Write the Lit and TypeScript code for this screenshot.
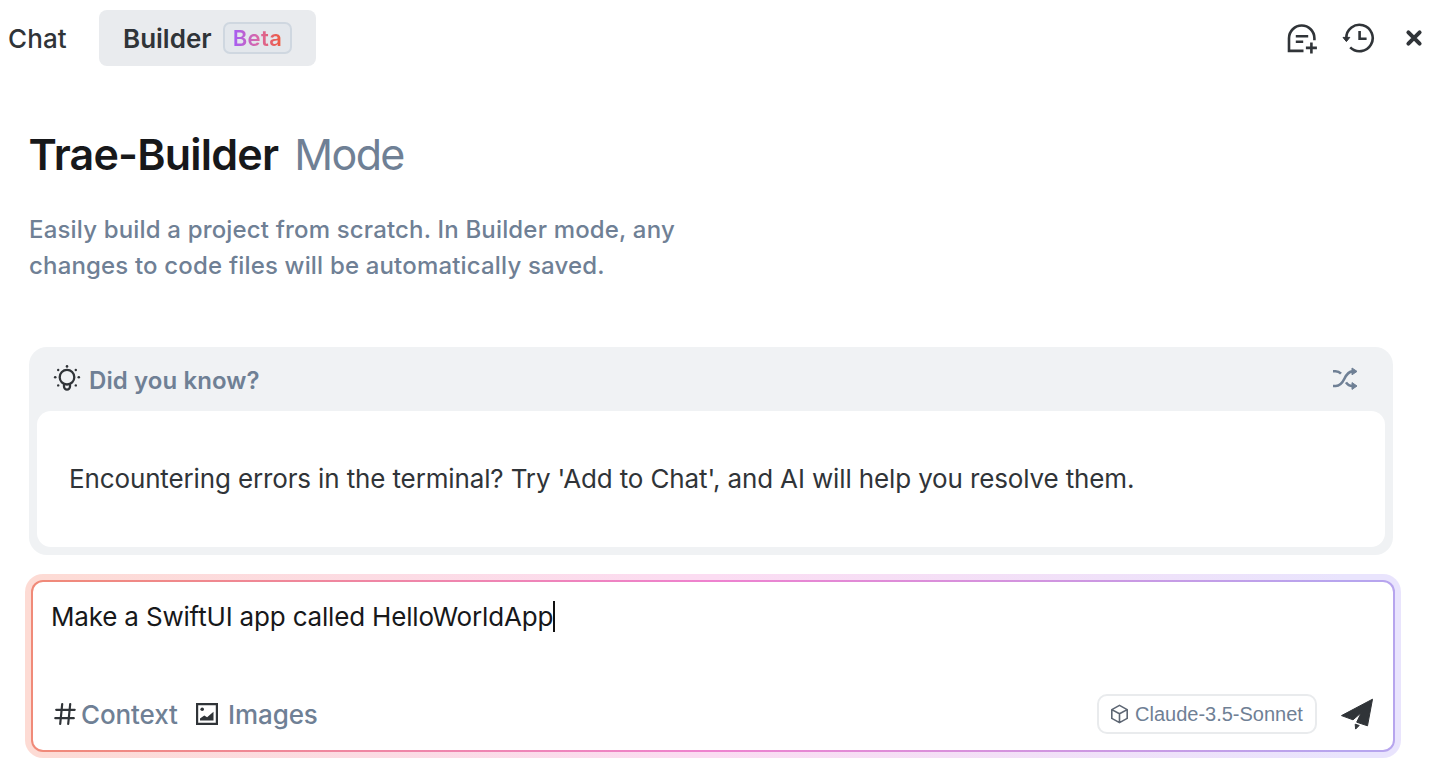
import { LitElement, html, css } from "lit";
import { customElement } from "lit/decorators.js";

@customElement("app-root")
export class AppRoot extends LitElement {
  static styles = css`
    :host {
      display: block;
      height: 774px;
      background: #fff;
      overflow: hidden;
      font-family: Inter, "Noto Sans", sans-serif;
      color: #303438;
      white-space: nowrap;
    }
    * { box-sizing: border-box; }
    svg { display: block; flex: none; }
    .top {
      display: flex;
      align-items: center;
      height: 76px;
      padding: 0 10px 0 8px;
    }
    .chat { width: 91px; font-size: 26px; font-weight: 500; letter-spacing: 0.1px; }
    .tab {
      display: flex;
      align-items: center;
      width: 217px;
      height: 56px;
      padding-left: 24px;
      border-radius: 8px;
      background: #e9ebee;
    }
    .builder { width: 100px; font-size: 26px; font-weight: 600; letter-spacing: 0; }
    .beta {
      display: flex;
      align-items: center;
      justify-content: center;
      width: 69px;
      height: 32px;
      border: 2px solid #cfd7e0;
      border-radius: 7px;
      background: #e3e7ec;
      font-size: 22px;
      font-weight: 600;
    }
    .beta span {
      background: linear-gradient(90deg, #a45cf5, #d868a8 50%, #ef5a3c);
      -webkit-background-clip: text;
      background-clip: text;
      color: transparent;
      letter-spacing: 0.4px;
    }
    .actions { display: flex; align-items: center; margin-left: auto; }
    .history { margin-left: 24px; }
    .close { margin-left: 27px; }
    h1 {
      margin: 51px 0 0 28.5px;
      line-height: 54px;
      font-size: 43px;
      font-weight: 600;
      letter-spacing: -0.8px;
      color: #17181a;
    }
    h1 span { margin-left: 6px; font-weight: 400; color: #6f8095; letter-spacing: -1.6px; }
    .intro {
      margin: 31px 0 0 29px;
      line-height: 36px;
      font-size: 24px;
      font-weight: 500;
      letter-spacing: 0.17px;
      color: #6f8095;
    }
    .tip {
      width: 1364px;
      height: 208px;
      margin: 63px 0 0 29px;
      padding: 0 8px 8px;
      border-radius: 18px;
      background: #f0f2f4;
    }
    .tip-head { display: flex; align-items: center; height: 64px; padding: 0 27px 0 16px; }
    .tip-title { margin-left: 8px; padding-top: 3px; font-size: 24px; font-weight: 600; letter-spacing: 0.1px; color: #6f8095; }
    .shuffle { margin-left: auto; }
    .tip-body {
      display: flex;
      align-items: center;
      height: 136px;
      padding: 0 0 2px 32px;
      border-radius: 14px;
      background: #fff;
      font-size: 26px;
      letter-spacing: -0.135px;
    }
    .glow {
      width: 1376px;
      height: 184px;
      margin: 19px 0 0 25px;
      padding: 6px;
      border-radius: 18px;
      background: linear-gradient(90deg, #fddbd4, #fbdcf2 50%, #e9e4fd 96%);
    }
    .edge {
      height: 172px;
      padding: 2px;
      border-radius: 12px;
      background: linear-gradient(90deg, #f08a78, #ee82cf 50%, #b7a5ee 96%);
    }
    .input {
      display: flex;
      flex-direction: column;
      justify-content: space-between;
      height: 168px;
      padding: 18px 19px 16px 18px;
      border-radius: 10px;
      background: #fff;
    }
    .prompt { display: flex; align-items: center; height: 32px; font-size: 26px; letter-spacing: -0.18px; color: #17181a; }
    .caret { width: 2px; height: 31px; background: #111; }
    .tools { display: flex; align-items: center; height: 40px; }
    .label { padding-top: 1px; font-size: 26px; font-weight: 500; letter-spacing: -0.1px; color: #6f8095; }
    .context { width: 114px; margin-left: 4px; }
    .images { margin-left: 9px; }
    .model {
      display: flex;
      align-items: center;
      width: 220px;
      height: 40px;
      margin-left: auto;
      padding-left: 11px;
      border: 2px solid #e9ebed;
      border-radius: 10px;
      font-family: "Liberation Sans", Arial, sans-serif;
      font-size: 20px;
      color: #6f8095;
    }
    .model span { margin-left: 6px; }
    .send { margin: -1px 0 0 23px; }
  `;

  render() {
    return html`
      <div class="top">
        <div class="chat">Chat</div>
        <div class="tab">
          <span class="builder">Builder</span>
          <span class="beta"><span>Beta</span></span>
        </div>
        <div class="actions">
          <svg width="32" height="32" viewBox="0 0 32 32" fill="none" stroke="#303438" stroke-width="2.6">
            <path d="M18.500 28.900H4V16.200a12.700 12.700 0 0 1 25.400 0v2M10.800 14.300h12.400M10.800 19.800h7.400M26.400 20.400v11M20.900 25.900h11" />
          </svg>
          <svg class="history" width="34" height="32" viewBox="0 0 34 32" fill="none" stroke="#303438" stroke-width="2.600">
            <path d="M5.300 17.200V16a13.200 13.200 0 1 1 3.900 9.400M18.600 9v7.700h7" />
            <path d="M2 15.400h6.800L5.400 19.600z" fill="#303438" stroke-width="1" stroke-linejoin="round" />
          </svg>
          <svg class="close" width="24" height="24" viewBox="0 0 24 24" stroke="#303438" stroke-width="4" stroke-linecap="round">
            <path d="M6.400 6.400l11.200 11.200M17.600 6.400L6.400 17.600" />
          </svg>
        </div>
      </div>
      <h1>Trae-Builder <span>Mode</span></h1>
      <div class="intro">Easily build a project from scratch. In Builder mode, any<br />changes to code files will be automatically saved.</div>
      <div class="tip">
        <div class="tip-head">
          <svg width="28" height="28" viewBox="0 0 28 28" fill="none" stroke="#303438" stroke-width="2.300">
            <circle cx="14" cy="12.200" r="7.300" />
            <path d="M11 19v2.600a3 3 0 0 0 6 0V19" />
            <g fill="#303438" stroke="none">
              <circle cx="14" cy="1.400" r="1.300" /><circle cx="5.200" cy="5" r="1.200" /><circle cx="22.800" cy="5" r="1.200" />
              <circle cx="2.200" cy="12.200" r="1.300" /><circle cx="25.800" cy="12.200" r="1.300" />
              <circle cx="5.200" cy="20.400" r="1.200" /><circle cx="22.800" cy="20.400" r="1.200" />
            </g>
          </svg>
          <span class="tip-title">Did you know?</span>
          <svg class="shuffle" width="26" height="24" viewBox="0 0 26 24" fill="none" stroke="#6f8095" stroke-width="2.600">
            <path d="M1 4.200h2.500c2.300 0 4 .8 5.500 2.400M1 19h2.800c4 0 6.300-2.500 8.600-7.200S16.800 4.400 20.500 4.400M14 15.400c1.600 2.500 3.200 3.600 6.500 3.600" />
            <path d="M20 1l5 3.400-5 3.400zM20 15.600l5 3.400-5 3.400z" fill="#6f8095" stroke-width="1" stroke-linejoin="round" />
          </svg>
        </div>
        <div class="tip-body">Encountering errors in the terminal? Try 'Add to Chat', and AI will help you resolve them.</div>
      </div>
      <div class="glow"><div class="edge"><div class="input">
        <div class="prompt"><span>Make a SwiftUI app called HelloWorldApp</span><i class="caret"></i></div>
        <div class="tools">
          <svg width="26" height="26" viewBox="0 0 26 26" fill="none" stroke="#303438" stroke-width="2.200" stroke-linecap="round">
            <path d="M11.200 3L9.200 23M19.200 3L17.200 23M5.200 8.800h18.500M4.300 17.200h18.500" />
          </svg>
          <span class="label context">Context</span>
          <svg width="24" height="24" viewBox="0 0 24 24" fill="none" stroke="#303438" stroke-width="2.200">
            <path d="M2.100 2.100h19.800v19.800H2.100z" />
            <g fill="#303438" stroke="none"><circle cx="7.200" cy="7.200" r="1.800" /><path d="M5 18.600v-2.200l4.300-3 2.800 1.900 6.400-5.500v8.800z" /></g>
          </svg>
          <span class="label images">Images</span>
          <div class="model">
            <svg width="19" height="20" viewBox="0 0 19 20" fill="none" stroke="#5d6673" stroke-width="1.600" stroke-linejoin="round">
              <path d="M9.500 1.400l7.700 4.200v8.800l-7.700 4.200-7.700-4.200V5.600zM1.800 5.600l7.700 4.200 7.700-4.200M9.500 9.800v8.800" />
            </svg>
            <span>Claude-3.5-Sonnet</span>
          </div>
          <svg class="send" width="34" height="34" viewBox="0 0 34 34" fill="#303438" stroke="#303438" stroke-width="1" stroke-linejoin="round">
            <path d="M32.500 2.200L1.500 18.600l11.500 4.200 8.200-7-4.500 9.400 10.800 3.600zM15.200 27.200l4 1.300-3.600 3.600z" />
          </svg>
        </div>
      </div></div></div>
    `;
  }
}
